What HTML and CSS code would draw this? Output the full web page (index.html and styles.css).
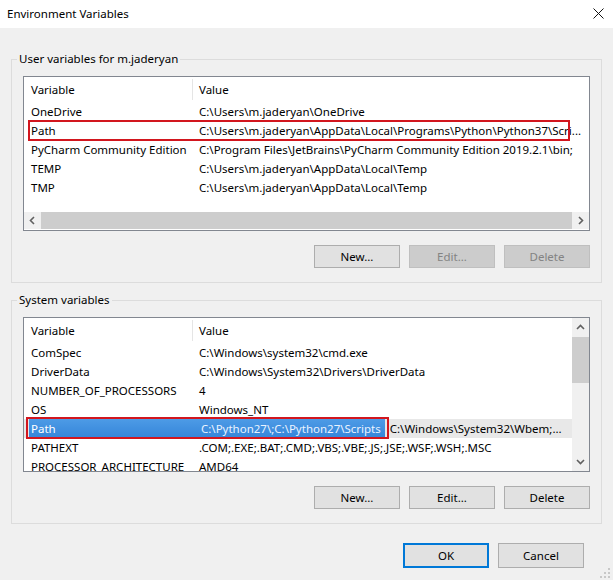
FILE: index.html
```html
<!DOCTYPE html>
<html lang="en">
<head>
    <meta charset="UTF-8">
    <title>Environment Variables</title>
    <link rel="stylesheet" href="styles.css">
</head>
<body>
    <div class="ventana">
        <div class="titlebar">
            <span>Environment Variables</span>
            <svg class="cerrar" width="11" height="11" viewBox="0 0 11 11">
                <path d="M0.5 0.5 L10.5 10.5 M10.5 0.5 L0.5 10.5" stroke="#111" stroke-width="1" fill="none"/>
            </svg>
        </div>

        <div class="contenido">
            <!-- Variables de usuario -->
            <fieldset class="grupo">
                <legend>User variables for m.jaderyan</legend>
                <div class="lista">
                    <div class="lista-area">
                        <div class="fila cabecera">
                            <div class="c1">Variable</div>
                            <div class="c2">Value</div>
                        </div>
                        <div class="fila"><div class="c1">OneDrive</div><div class="c2">C:\Users\m.jaderyan\OneDrive</div></div>
                        <div class="fila">
                            <div class="c1">Path</div><div class="c2">C:\Users\m.jaderyan\AppData\Local\Programs\Python\Python37\Scri...</div>
                            <span class="marca marca-usuario"></span>
                        </div>
                        <div class="fila"><div class="c1">PyCharm Community Edition</div><div class="c2">C:\Program Files\JetBrains\PyCharm Community Edition 2019.2.1\bin;</div></div>
                        <div class="fila"><div class="c1">TEMP</div><div class="c2">C:\Users\m.jaderyan\AppData\Local\Temp</div></div>
                        <div class="fila"><div class="c1">TMP</div><div class="c2">C:\Users\m.jaderyan\AppData\Local\Temp</div></div>
                    </div>
                    <div class="hscroll">
                        <svg class="flecha" width="9" height="9" viewBox="0 0 9 9"><path d="M6 1 L2.5 4.5 L6 8" stroke="#606060" stroke-width="1.6" fill="none"/></svg>
                        <div class="hthumb"></div>
                        <svg class="flecha" width="9" height="9" viewBox="0 0 9 9"><path d="M3 1 L6.5 4.5 L3 8" stroke="#606060" stroke-width="1.6" fill="none"/></svg>
                    </div>
                </div>
                <div class="botones">
                    <button class="btn">New...</button>
                    <button class="btn" disabled>Edit...</button>
                    <button class="btn" disabled>Delete</button>
                </div>
            </fieldset>

            <!-- Variables del sistema -->
            <fieldset class="grupo grupo-sistema">
                <legend>System variables</legend>
                <div class="lista lista-sistema">
                    <div class="lista-area">
                        <div class="fila cabecera">
                            <div class="c1">Variable</div>
                            <div class="c2">Value</div>
                        </div>
                        <div class="fila"><div class="c1">ComSpec</div><div class="c2">C:\Windows\system32\cmd.exe</div></div>
                        <div class="fila"><div class="c1">DriverData</div><div class="c2">C:\Windows\System32\Drivers\DriverData</div></div>
                        <div class="fila"><div class="c1">NUMBER_OF_PROCESSORS</div><div class="c2">4</div></div>
                        <div class="fila"><div class="c1">OS</div><div class="c2">Windows_NT</div></div>
                        <div class="fila seleccionada">
                            <div class="c1">Path</div>
                            <div class="c2"><span class="resaltado">C:\Python27\;C:\Python27\Scripts</span> C:\Windows\System32\Wbem;...</div>
                            <span class="marca marca-sistema"></span>
                        </div>
                        <div class="fila"><div class="c1">PATHEXT</div><div class="c2">.COM;.EXE;.BAT;.CMD;.VBS;.VBE;.JS;.JSE;.WSF;.WSH;.MSC</div></div>
                        <div class="fila"><div class="c1">PROCESSOR_ARCHITECTURE</div><div class="c2">AMD64</div></div>
                    </div>
                    <div class="vscroll">
                        <svg class="flecha" width="9" height="9" viewBox="0 0 9 9"><path d="M1 6 L4.5 2.5 L8 6" stroke="#606060" stroke-width="1.6" fill="none"/></svg>
                        <div class="vthumb"></div>
                        <div class="relleno"></div>
                        <svg class="flecha" width="9" height="9" viewBox="0 0 9 9"><path d="M1 3 L4.5 6.5 L8 3" stroke="#606060" stroke-width="1.6" fill="none"/></svg>
                    </div>
                </div>
                <div class="botones">
                    <button class="btn">New...</button>
                    <button class="btn">Edit...</button>
                    <button class="btn">Delete</button>
                </div>
            </fieldset>

            <div class="botones-final">
                <button class="btn btn-ok">OK</button>
                <button class="btn btn-grande">Cancel</button>
            </div>
        </div>

        <svg class="agarre" width="10" height="10" viewBox="0 0 10 10">
            <rect x="8" y="0" width="2" height="2" fill="#c8c8c8"/>
            <rect x="4" y="4" width="2" height="2" fill="#c8c8c8"/>
            <rect x="8" y="4" width="2" height="2" fill="#c8c8c8"/>
            <rect x="0" y="8" width="2" height="2" fill="#c8c8c8"/>
            <rect x="4" y="8" width="2" height="2" fill="#c8c8c8"/>
            <rect x="8" y="8" width="2" height="2" fill="#c8c8c8"/>
        </svg>
    </div>
</body>
</html>
```

FILE: styles.css
```css
body {
    margin: 0;
    padding: 0;
    font-family: "Noto Sans", "Open Sans", sans-serif;
    font-size: 11.5px;
    color: #000;
    background-color: #f0f0f0;
}
.ventana {
    position: relative;
    width: 613px;
    height: 580px;
    overflow: hidden;
    background-color: #f0f0f0;
}
.titlebar {
    height: 28px;
    background-color: #fff;
    display: flex;
    align-items: center;
    justify-content: space-between;
    padding: 0 9px 2px 7px;
    box-sizing: border-box;
}
.contenido {
    padding: 23px 11px 0 11px;
}
.grupo {
    margin: 0;
    min-width: 0;
    border: 1px solid #dcdcdc;
    padding: 0 11px 14px 11px;
}
.grupo legend {
    margin-left: -6px;
    padding: 0 2px;
    line-height: 16px;
}
.grupo-sistema {
    margin-top: 9px;
}
.lista {
    margin-top: 9px;
    height: 155px;
    min-width: 0;
    box-sizing: border-box;
    border: 1px solid #828790;
    background-color: #fff;
    display: flex;
    flex-direction: column;
    overflow: hidden;
}
.lista-sistema {
    flex-direction: row;
}
.lista-area {
    flex: 1;
    min-width: 0;
    overflow: hidden;
}
.fila {
    position: relative;
    display: flex;
    height: 19px;
    line-height: 19px;
    white-space: nowrap;
}
.fila.cabecera {
    height: 25px;
    line-height: 24px;
}
.c1 {
    width: 169px;
    flex-shrink: 0;
    padding-left: 7px;
    box-sizing: border-box;
    overflow: hidden;
}
.c2 {
    padding-left: 6px;
    white-space: nowrap;
}
.cabecera .c1 {
    border-right: 1px solid #e5e5e5;
    height: 21px;
    margin-top: 2px;
    line-height: 21px;
}
.cabecera .c2 {
    line-height: 25px;
}
.seleccionada {
    background-color: #e8e8e8;
    color: #000;
}
.seleccionada .c1 {
    margin-left: 5px;
    width: 164px;
    padding-left: 2px;
    background: linear-gradient(#4d9be6, #3585d9);
    color: #fff;
}
.seleccionada .c2 {
    padding-left: 0;
}
.resaltado {
    display: inline-block;
    padding-left: 8px;
    padding-right: 4px;
    margin-right: 2px;
    background: linear-gradient(#4d9be6, #3585d9);
    color: #eaf3ff;
}
/* marcas rojas encima de las filas */
.marca {
    position: absolute;
    border: 2px solid #d2161e;
    top: -1px;
    bottom: -1px;
    pointer-events: none;
}
.marca-usuario {
    left: 4px;
    width: 542px;
    box-sizing: border-box;
}
.marca-sistema {
    left: 2px;
    width: 363px;
    box-sizing: border-box;
    top: -2px;
}
.hscroll {
    height: 17px;
    margin-top: auto;
    margin-bottom: 1px;
    display: flex;
    align-items: center;
    background-color: #f0f0f0;
}
.hscroll .flecha {
    margin: 0 4px;
    flex-shrink: 0;
}
.hthumb {
    flex: 1;
    height: 17px;
    background-color: #cdcdcd;
}
.vscroll {
    width: 17px;
    flex-shrink: 0;
    display: flex;
    flex-direction: column;
    align-items: center;
    background-color: #f0f0f0;
}
.vscroll .flecha {
    margin: 5px 0;
    flex-shrink: 0;
}
.vthumb {
    width: 17px;
    height: 46px;
    background-color: #cdcdcd;
}
.relleno {
    flex: 1;
}
.botones {
    display: flex;
    justify-content: flex-end;
    gap: 9px;
    margin-top: 14px;
}
.btn {
    width: 86px;
    height: 23px;
    font-family: inherit;
    font-size: 11.5px;
    color: #000;
    background-color: #e1e1e1;
    border: 1px solid #adadad;
    padding: 0;
}
.btn:disabled {
    background-color: #cccccc;
    border-color: #bfbfbf;
    color: #838383;
}
.botones-final {
    display: flex;
    justify-content: flex-end;
    gap: 9px;
    margin-top: 19px;
    padding-right: 18px;
}
.btn-ok, .btn-grande {
    height: 25px;
}
.btn-ok {
    border: 2px solid #0078d7;
}
.agarre {
    position: absolute;
    right: 3px;
    bottom: 2px;
}
```
